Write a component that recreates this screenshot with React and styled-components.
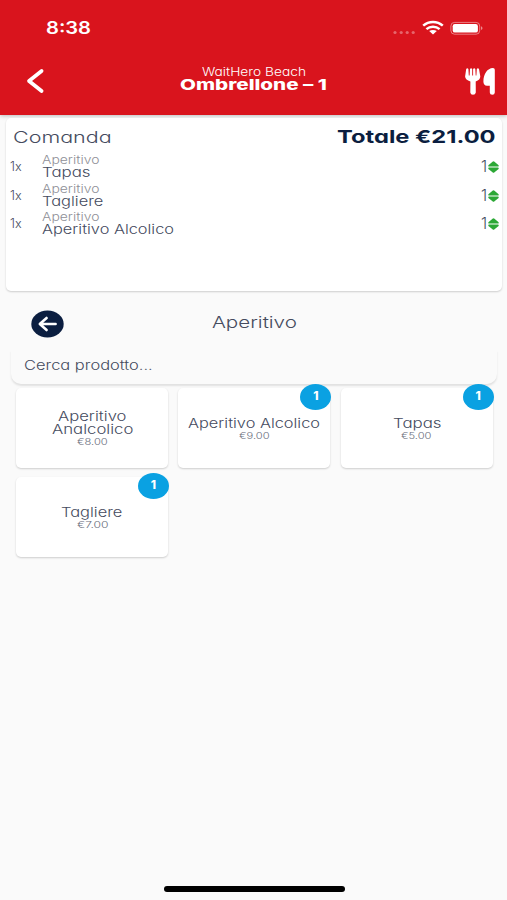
import React, { useLayoutEffect, useRef, useState } from 'react'
import styled, { createGlobalStyle } from 'styled-components'

const GlobalStyle = createGlobalStyle`
  * {
    box-sizing: border-box;
  }
  body {
    margin: 0;
    background: #fafafa;
    font-family: Inter, "Liberation Sans", sans-serif;
    font-feature-settings: "cv11", "ss03";
    color: #454b5e;
  }
`

const Screen = styled.div`
  display: flex;
  flex-direction: column;
  width: 507px;
  height: 900px;
  overflow: hidden;
  background: #fafafa;
`

const Header = styled.header`
  height: 115px;
  flex: none;
  background: #d9141d;
  color: #fff;
  box-shadow: 0 1px 4px rgba(0, 0, 0, 0.25);
`

const StatusBar = styled.div`
  display: flex;
  justify-content: space-between;
  align-items: center;
  height: 55px;
  padding: 0 23px 0 46px;
`

const StatusIcons = styled.svg`
  display: block;
  width: 92px;
  height: 16px;
`

const NavBar = styled.div`
  display: flex;
  justify-content: space-between;
  height: 59px;
  padding: 0 11px 0 26px;
`

const NavIcon = styled.svg`
  display: block;
  width: ${p => p.$width}px;
  height: 28px;
  margin-top: 12px;
`

const NavTitle = styled.div`
  display: flex;
  flex-direction: column;
  align-items: center;
  padding: 10px 4px 0 0;
`

const Line = styled.span`
  display: block;
  flex: none;
  width: ${p => p.$width}px;
  height: ${p => p.$height || 13}px;
  line-height: ${p => p.$height || 13}px;
  font-size: ${p => p.$size}px;
  font-weight: ${p => p.$weight || 350};
  color: ${p => p.$color || 'inherit'};
`

const Stretched = styled.span`
  display: inline-block;
  white-space: nowrap;
  transform-origin: left center;
`

const Order = styled.section`
  height: 173px;
  flex: none;
  margin: 3px 5px 0 6px;
  padding: 7px 3px 0 4px;
  background: #fff;
  border-radius: 5px;
  box-shadow: 0 1px 2px rgba(0, 0, 0, 0.18);
`

const OrderHead = styled.div`
  display: flex;
  justify-content: space-between;
  height: 29px;
  padding: 0 4px 0 3px;
`

const OrderRow = styled.div`
  display: flex;
  height: 28.7px;
`

const Quantity = styled.div`
  width: 32px;
  padding-top: 6px;
`

const Product = styled.div`
  flex: 1;
`

const Stepper = styled.div`
  display: flex;
  gap: 1px;
  padding-top: 5px;
`

const StepperIcon = styled.svg`
  display: block;
  width: 11px;
  height: 12px;
  margin-top: 2px;
`

const CategoryBar = styled.div`
  display: grid;
  grid-template-columns: 1fr auto 1fr;
  height: 59px;
  flex: none;
  padding: 19px 31px 0;
`

const BackButton = styled.svg`
  display: block;
  width: 33px;
  height: 28px;
`

const CategoryName = styled.div`
  padding: 2px 0 0 1px;
`

const Search = styled.div`
  height: 34px;
  flex: none;
  margin: 0 10px 0 11px;
  padding: 6px 12px 6px 13px;
  background: #fafafa;
  border-radius: 0 0 10px 10px;
  box-shadow: 0 2px 2px rgba(0, 0, 0, 0.1);
`

const Products = styled.div`
  display: grid;
  grid-template-columns: repeat(3, 152px);
  grid-auto-rows: 80px;
  gap: 9px 10.3px;
  padding: 4px 0 0 16px;
`

const Card = styled.div`
  position: relative;
  display: flex;
  flex-direction: column;
  align-items: center;
  justify-content: center;
  padding-top: 1px;
  background: #fff;
  border-radius: 5px;
  box-shadow: 0 1px 2px rgba(0, 0, 0, 0.18);
`

const Badge = styled.span`
  position: absolute;
  top: -4px;
  right: -1px;
  width: 31px;
  height: 26px;
  border-radius: 50%;
  background: #0aa1e2;
  color: #fff;
  font-size: 12px;
  font-weight: 800;
  line-height: 23px;
  text-align: center;
`

const HomeIndicator = styled.div`
  width: 181px;
  height: 6px;
  flex: none;
  margin: auto auto 8px 164px;
  border-radius: 3px;
  background: #000;
`

function Label({ width, children, ...rest }) {
  const ref = useRef(null)
  const [scale, setScale] = useState(1)

  useLayoutEffect(() => {
    setScale(width / ref.current.offsetWidth)
  }, [width, children])

  return (
    <Line $width={width} {...rest}>
      <Stretched ref={ref} style={{ transform: `scaleX(${scale})` }}>{children}</Stretched>
    </Line>
  )
}

const order = [
  { name: 'Tapas', width: 48 },
  { name: 'Tagliere', width: 62 },
  { name: 'Aperitivo Alcolico', width: 132 },
]

const products = [
  { lines: [['Aperitivo', 69], ['Analcolico', 81]], price: '€8.00' },
  { lines: [['Aperitivo Alcolico', 132]], price: '€9.00', count: 1 },
  { lines: [['Tapas', 48]], price: '€5.00', count: 1 },
  { lines: [['Tagliere', 62]], price: '€7.00', count: 1 },
]

function TopBar() {
  return (
    <Header>
      <StatusBar>
        <Label width={45} $size={17} $weight={600} $height={20}>8:38</Label>
        <StatusIcons viewBox="0 0 92 16" fill="#fff">
          <g opacity="0.35">
            <circle cx="3" cy="12.5" r="1.6" />
            <circle cx="9.2" cy="12.5" r="1.6" />
            <circle cx="15.2" cy="12.5" r="1.6" />
            <circle cx="21.2" cy="12.5" r="1.6" />
          </g>
          <g fill="none" stroke="#fff" strokeWidth="2.5">
            <path d="M31.2 5.6C36.8 .7 45.2 .7 50.8 5.6" />
            <path d="M34.4 9.1C38.2 5.9 43.8 5.9 47.6 9.1" />
          </g>
          <path d="M37.2 11.1C39.4 9.5 42.6 9.5 44.8 11.1L41 14.6Z" />
          <rect x="58.9" y="2.4" width="28.8" height="11.8" rx="3.6" fill="none" stroke="#fff" strokeOpacity="0.45" />
          <rect x="60.7" y="4" width="25.2" height="8.6" rx="2.2" />
          <path d="M89 6.2C91 6.8 91 9.4 89 10Z" opacity="0.5" />
        </StatusIcons>
      </StatusBar>
      <NavBar>
        <NavIcon $width={20} viewBox="0 0 20 28">
          <path d="M15.6 4L3 14L15.6 24" fill="none" stroke="#fff" strokeWidth="3.7" strokeLinecap="round" strokeLinejoin="round" />
        </NavIcon>
        <NavTitle>
          <Label width={104} $size={11.5} $weight={300} $height={14}>WaitHero Beach</Label>
          <Label width={147} $size={15} $weight={800} $height={12}>Ombrellone – 1</Label>
        </NavTitle>
        <NavIcon $width={31} viewBox="0 0 31 28" fill="#fff">
          <path d="M1.2 2Q2.3 .4 3.4 2L3.8 8.6H4.6L5 2Q6.1 .3 7.2 2V8.6H8.1V2Q9.2 .3 10.3 2L10.7 8.6H11.4L11.8 2Q12.9 .4 14 2L15.3 9.5Q15.3 13 10.7 14.4L10.8 25.5Q10.4 27.7 8 27.7T5.3 25.5L5.4 14.4Q.3 13 .1 9.5Z" />
          <path d="M29.8 2.7V25.5Q29.7 27.7 27.3 27.7T24.8 25.5V18.8H22Q18.4 18.4 18.4 14.5C18.4 6.6 22.5 1.2 27.8 .9Q29.8 .8 29.8 2.7Z" />
        </NavIcon>
      </NavBar>
    </Header>
  )
}

function Comanda() {
  return (
    <Order>
      <OrderHead>
        <Label width={99} $size={16.5} $height={25}>Comanda</Label>
        <Label width={158} $size={18} $weight={700} $height={24} $color="#0b1e40">Totale €21.00</Label>
      </OrderHead>
      {order.map(item => (
        <OrderRow key={item.name}>
          <Quantity>
            <Label width={12} $size={12.5} $height={14}>1x</Label>
          </Quantity>
          <Product>
            <Label width={57} $size={11} $height={12} $color="#8f9097">Aperitivo</Label>
            <Label width={item.width} $size={13}>{item.name}</Label>
          </Product>
          <Stepper>
            <Label width={6} $size={15.5} $weight={300} $height={15}>1</Label>
            <StepperIcon viewBox="0 0 11 12" fill="#2ca836">
              <path d="M4.5 .8Q5.5 -.2 6.5 .8L10.6 4.3Q11 5.6 10 5.6H1Q0 5.6 .4 4.3Z" />
              <path d="M4.5 11.2Q5.5 12.2 6.5 11.2L10.6 7.9Q11 6.6 10 6.6H1Q0 6.6 .4 7.9Z" />
            </StepperIcon>
          </Stepper>
        </OrderRow>
      ))}
    </Order>
  )
}

function ProductCard({ lines, price, count }) {
  return (
    <Card>
      {lines.map(([text, width]) => (
        <Label key={text} width={width} $size={13}>{text}</Label>
      ))}
      <Label width={31} $size={9} $height={11} $color="#6a6e7c">{price}</Label>
      {count && <Badge>{count}</Badge>}
    </Card>
  )
}

function App() {
  return (
    <>
      <GlobalStyle />
      <Screen>
        <TopBar />
        <Comanda />
        <CategoryBar>
          <BackButton viewBox="0 0 33 28">
            <ellipse cx="16.5" cy="14" rx="16.2" ry="13.5" fill="#0b1e40" />
            <path d="M24.6 14H9M15.6 8L8.8 14L15.6 20" fill="none" stroke="#fff" strokeWidth="2.6" strokeLinecap="round" strokeLinejoin="round" />
          </BackButton>
          <CategoryName>
            <Label width={85} $size={16} $height={20}>Aperitivo</Label>
          </CategoryName>
        </CategoryBar>
        <Search>
          <Label width={129} $size={13} $height={18}>Cerca prodotto...</Label>
        </Search>
        <Products>
          {products.map((product, i) => (
            <ProductCard key={i} {...product} />
          ))}
        </Products>
        <HomeIndicator />
      </Screen>
    </>
  )
}

export default App
